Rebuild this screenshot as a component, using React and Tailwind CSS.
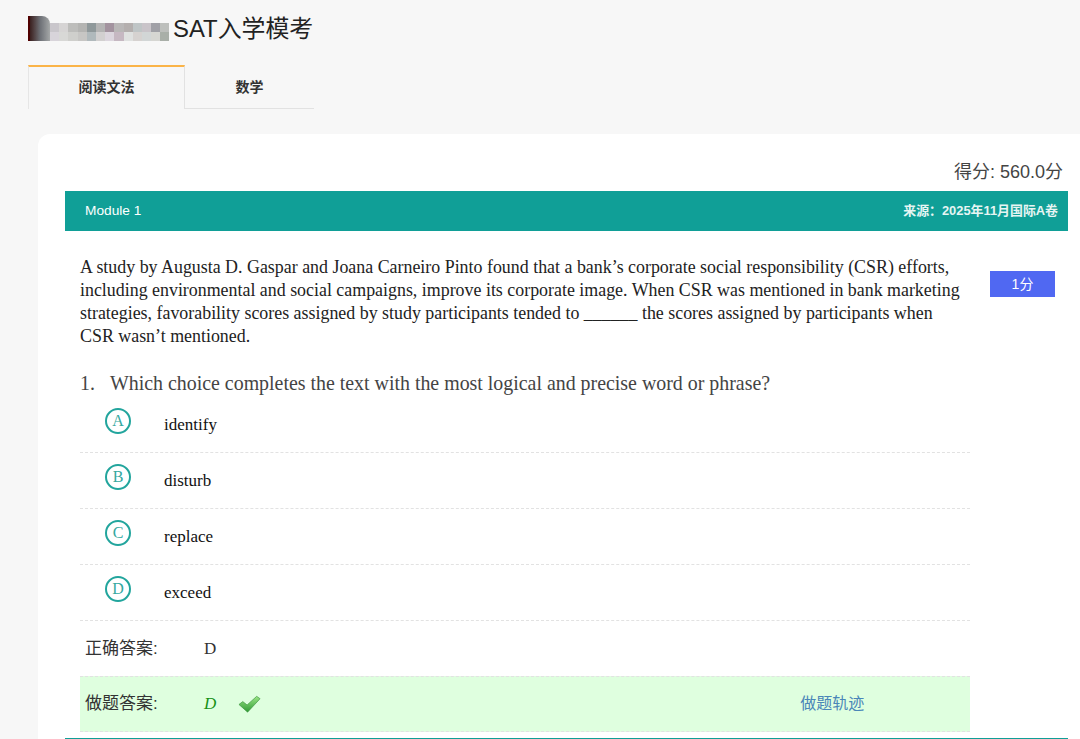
import React from "react";

const SANS = "font-['Liberation_Sans','Noto_Sans_CJK_SC',sans-serif]";
const SERIF = "font-['Liberation_Serif','Noto_Sans_CJK_SC',serif]";

const mosaicTop = ["#c9c6cb", "#d6d4d4", "#bdbdbb", "#b4b4b2", "#8f989a", "#b4b4b4", "#a3939f", "#b9b7b7", "#b4afae", "#bfc5c6", "#c9c4c9", "#a0a0a6", "#bdbfbc"];
const mosaicBottom = ["#d8d4da", "#d8d8d6", "#cfcfcc", "#c7c6c4", "#b0b9bc", "#d2d0d0", "#dcd6de", "#c6b8c2", "#dfe1e0", "#d6d2d0", "#d2d6d6", "#d6d6d2", "#a9afa8"];

const options = [
  { key: "A", text: "identify" },
  { key: "B", text: "disturb" },
  { key: "C", text: "replace" },
  { key: "D", text: "exceed" },
];

const Logo = () => (
  <div className="flex items-start w-[145px] h-[30px] shrink-0 pt-[2px]">
    <div className="w-[22px] h-[25px] bg-gradient-to-r from-[#3a2020] via-[#6d7076] to-[#a5a8a8] border-l-2 border-[#500000] rounded-tr-lg blur-[0.5px]" />
    <div className="mt-[7px] blur-[0.6px]">
      <div className="flex">
        {mosaicTop.map((c, i) => (
          <div key={i} className="w-[9.2px] h-[9px]" style={{ backgroundColor: c }} />
        ))}
      </div>
      <div className="flex">
        {mosaicBottom.map((c, i) => (
          <div key={i} className="w-[9.2px] h-[9px]" style={{ backgroundColor: c }} />
        ))}
      </div>
    </div>
  </div>
);

const Check = () => (
  <svg width="23" height="20" viewBox="0 0 24 20" className="ml-[22px]">
    <defs>
      <linearGradient id="chk" x1="0" y1="0" x2="0" y2="1">
        <stop offset="0" stopColor="#9be685" />
        <stop offset="1" stopColor="#2f9a35" />
      </linearGradient>
    </defs>
    <path d="M1 10.5 L5 7.5 L9.5 11 L19.5 2 L23 4.5 L10 18.5 Z" fill="url(#chk)" stroke="#3d9440" strokeWidth="0.7" />
  </svg>
);

export default function App() {
  return (
    <div className={`min-h-screen h-[739px] overflow-hidden bg-[#f7f7f7] ${SANS}`}>
      {/* Title */}
      <div className="pl-[28px] pt-[14px] h-[65px] flex items-start">
        <Logo />
        <span className="text-[23.9px] leading-[30px] text-[#222]">SAT入学模考</span>
      </div>

      {/* Tabs */}
      <div className="flex ml-[28px] h-[44px] w-[286px]">
        <div className="w-[157px] h-[44px] border-t-2 border-t-[#fbb448] border-l border-r border-l-[#e6e6e6] border-r-[#e2e2e2] flex items-center justify-center pb-[2px] text-[14px] font-bold text-[#333]">
          阅读文法
        </div>
        <div className="w-[129px] border-b border-[#e2e2e2] flex items-center justify-center pt-px text-[14px] font-bold text-[#333]">
          数学
        </div>
      </div>

      {/* Card */}
      <div className="ml-[38px] mt-[25px] bg-white rounded-tl-xl pl-[27px] h-[610px]">
        <div className="h-[57px] pr-[17px] pt-[27px] text-right text-[18px] leading-[23px] text-[#444]">
          得分: 560.0分
        </div>
        <div className="flex items-center justify-between w-[1003px] h-[40px] bg-[#109f97] text-white pl-[20px] pr-[10px]">
          <span className="text-[13.7px] pt-px">Module 1</span>
          <span className="text-[12.9px] font-bold text-[#e6f5f3]">来源：2025年11月国际A卷</span>
        </div>

        <div className={`flex ${SERIF}`}>
          <div className="w-[890px] ml-[15px] shrink-0">
            <p className="pt-[25px] text-[17.9px] leading-[23px] text-[#222]">
              A study by Augusta D. Gaspar and Joana Carneiro Pinto found that a bank’s corporate social responsibility (CSR) efforts,
              including environmental and social campaigns, improve its corporate image. When CSR was mentioned in bank marketing
              strategies, favorability scores assigned by study participants tended to ______ the scores assigned by participants when
              CSR wasn’t mentioned.
            </p>
            <div className="mt-[22px] text-[19.9px] leading-[26px] text-[#444] flex">
              <span className="w-[30px]">1.</span>
              <span>Which choice completes the text with the most logical and precise word or phrase?</span>
            </div>

            <div className="mt-px">
              {options.map((o) => (
                <div key={o.key} className="flex h-[56px] border-b border-dashed border-[#e2e2e2]">
                  <div className="ml-[25px] mt-[11px] w-[26px] h-[26px] rounded-full border-2 border-[#22a59d] flex items-center justify-center text-[16px] text-[#35a8a0]">
                    {o.key}
                  </div>
                  <div className="ml-[33px] mt-[17px] text-[17px] leading-[22px] text-[#111]">{o.text}</div>
                </div>
              ))}
            </div>

            <div className="flex items-center h-[55px] pl-[5px] text-[#333]">
              <span className={`w-[119px] text-[17px] ${SANS}`}>正确答案:</span>
              <span className="text-[17px]">D</span>
            </div>
            <div className="flex items-center h-[56px] pl-[5px] bg-[#dfffdf] border-t border-b border-dashed border-[#e2e2e2]">
              <span className={`w-[119px] text-[17px] text-[#333] ${SANS}`}>做题答案:</span>
              <span className="text-[17px] italic text-[#179117]">D</span>
              <Check />
              <span className={`ml-[539px] text-[16px] text-[#4a86b8] ${SANS}`}>做题轨迹</span>
            </div>
            <div className="mt-[6px] w-[1003px] -ml-[15px] h-px bg-[#109f97]" />
          </div>

          <div className={`ml-[20px] mt-[40px] w-[65px] h-[26px] bg-[#5068f2] text-white text-[14px] flex items-center justify-center ${SANS}`}>
            1分
          </div>
        </div>
      </div>
    </div>
  );
}
